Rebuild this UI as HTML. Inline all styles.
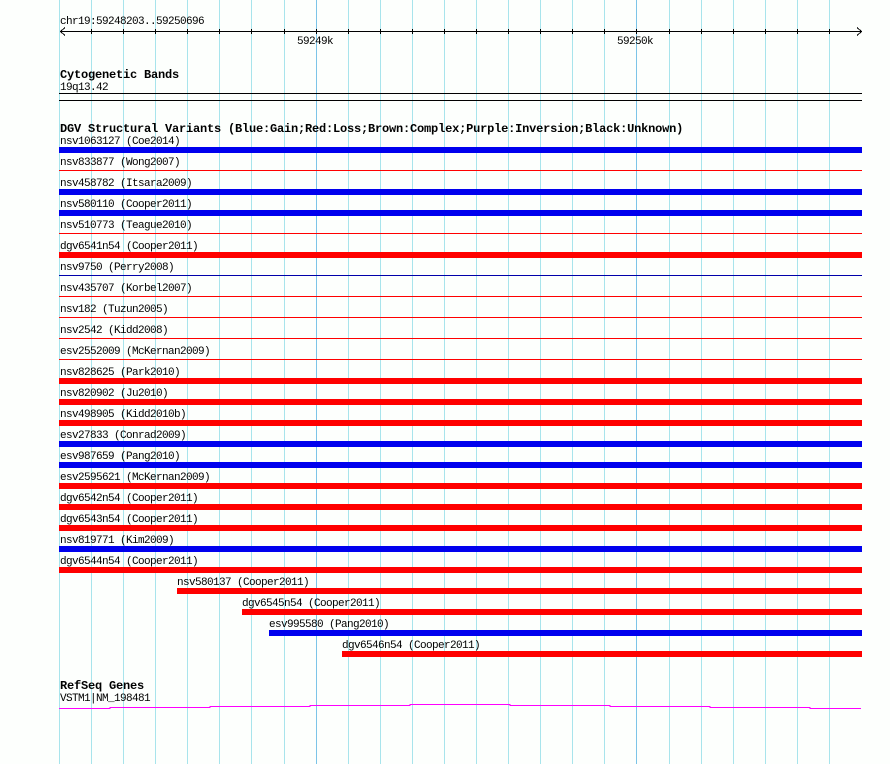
<!DOCTYPE html>
<html><head><meta charset="utf-8"><style>
body{margin:0;width:890px;height:764px;background:#fdfffd;position:relative;overflow:hidden;font-family:"Liberation Mono","DejaVu Sans Mono",monospace;}
.g{position:absolute;top:0;height:764px;width:1px;background:#a8e4ec;}
.gd{background:#7cc4e8;}
.t{position:absolute;font-size:11px;letter-spacing:-0.6px;line-height:10px;color:#000;white-space:pre;margin-top:2px;}
.b{position:absolute;font-size:12px;letter-spacing:-0.2px;line-height:12px;font-weight:bold;color:#000;white-space:pre;margin-top:1px;}
.r{position:absolute;}
</style></head><body>
<div class="g" style="left:59px"></div><div class="g" style="left:91px"></div><div class="g" style="left:123px"></div><div class="g" style="left:155px"></div><div class="g" style="left:187px"></div><div class="g" style="left:219px"></div><div class="g" style="left:251px"></div><div class="g" style="left:284px"></div><div class="g gd" style="left:316px"></div><div class="g" style="left:348px"></div><div class="g" style="left:380px"></div><div class="g" style="left:412px"></div><div class="g" style="left:444px"></div><div class="g" style="left:476px"></div><div class="g" style="left:508px"></div><div class="g" style="left:540px"></div><div class="g" style="left:572px"></div><div class="g" style="left:604px"></div><div class="g gd" style="left:636px"></div><div class="g" style="left:669px"></div><div class="g" style="left:701px"></div><div class="g" style="left:733px"></div><div class="g" style="left:765px"></div><div class="g" style="left:797px"></div><div class="g" style="left:829px"></div>

<div class="t" style="left:60px;top:15px">chr19:59248203..59250696</div>
<svg class="r" style="left:0;top:0" width="890" height="50">
<g stroke="#000" stroke-width="1" fill="none" shape-rendering="crispEdges">
<line x1="60" y1="31.5" x2="862" y2="31.5"/>
<polyline points="65,27.5 60.5,31.5 65,35.5"/>
<polyline points="857,27.5 861.5,31.5 857,35.5"/>
<path d="M91.5 29v5M123.5 29v5M155.5 29v5M187.5 29v5M219.5 29v5M251.5 29v5M284.5 29v5M316.5 29v5M348.5 29v5M380.5 29v5M412.5 29v5M444.5 29v5M476.5 29v5M508.5 29v5M540.5 29v5M572.5 29v5M604.5 29v5M636.5 29v5M669.5 29v5M701.5 29v5M733.5 29v5M765.5 29v5M797.5 29v5M829.5 29v5"/>
</g></svg>
<div class="t" style="left:297px;top:35px">59249k</div>
<div class="t" style="left:617px;top:35px">59250k</div>

<div class="b" style="left:60px;top:68px">Cytogenetic Bands</div>
<div class="t" style="left:60px;top:81px">19q13.42</div>
<div class="r" style="left:59px;top:93px;width:803px;height:1px;background:#000"></div>
<div class="r" style="left:59px;top:100px;width:803px;height:1px;background:#000"></div>

<div class="b" style="left:60px;top:122px">DGV Structural Variants (Blue:Gain;Red:Loss;Brown:Complex;Purple:Inversion;Black:Unknown)</div>

<div class="t" style="left:60px;top:135px">nsv1063127 (Coe2014)</div><div class="r" style="left:59px;top:147px;width:803px;height:6px;background:#0000ee"></div>
<div class="t" style="left:60px;top:156px">nsv833877 (Wong2007)</div><div class="r" style="left:59px;top:170px;width:803px;height:1px;background:#f00"></div>
<div class="t" style="left:60px;top:177px">nsv458782 (Itsara2009)</div><div class="r" style="left:59px;top:189px;width:803px;height:6px;background:#0000ee"></div>
<div class="t" style="left:60px;top:198px">nsv580110 (Cooper2011)</div><div class="r" style="left:59px;top:210px;width:803px;height:6px;background:#0000ee"></div>
<div class="t" style="left:60px;top:219px">nsv510773 (Teague2010)</div><div class="r" style="left:59px;top:233px;width:803px;height:1px;background:#f00"></div>
<div class="t" style="left:60px;top:240px">dgv6541n54 (Cooper2011)</div><div class="r" style="left:59px;top:252px;width:803px;height:6px;background:#f00"></div>
<div class="t" style="left:60px;top:261px">nsv9750 (Perry2008)</div><div class="r" style="left:59px;top:275px;width:803px;height:1px;background:#0000aa"></div>
<div class="t" style="left:60px;top:282px">nsv435707 (Korbel2007)</div><div class="r" style="left:59px;top:296px;width:803px;height:1px;background:#f00"></div>
<div class="t" style="left:60px;top:303px">nsv182 (Tuzun2005)</div><div class="r" style="left:59px;top:317px;width:803px;height:1px;background:#f00"></div>
<div class="t" style="left:60px;top:324px">nsv2542 (Kidd2008)</div><div class="r" style="left:59px;top:338px;width:803px;height:1px;background:#f00"></div>
<div class="t" style="left:60px;top:345px">esv2552009 (McKernan2009)</div><div class="r" style="left:59px;top:359px;width:803px;height:1px;background:#f00"></div>
<div class="t" style="left:60px;top:366px">nsv828625 (Park2010)</div><div class="r" style="left:59px;top:378px;width:803px;height:6px;background:#f00"></div>
<div class="t" style="left:60px;top:387px">nsv820902 (Ju2010)</div><div class="r" style="left:59px;top:399px;width:803px;height:6px;background:#f00"></div>
<div class="t" style="left:60px;top:408px">nsv498905 (Kidd2010b)</div><div class="r" style="left:59px;top:420px;width:803px;height:6px;background:#f00"></div>
<div class="t" style="left:60px;top:429px">esv27833 (Conrad2009)</div><div class="r" style="left:59px;top:441px;width:803px;height:6px;background:#0000ee"></div>
<div class="t" style="left:60px;top:450px">esv987659 (Pang2010)</div><div class="r" style="left:59px;top:462px;width:803px;height:6px;background:#0000ee"></div>
<div class="t" style="left:60px;top:471px">esv2595621 (McKernan2009)</div><div class="r" style="left:59px;top:483px;width:803px;height:6px;background:#f00"></div>
<div class="t" style="left:60px;top:492px">dgv6542n54 (Cooper2011)</div><div class="r" style="left:59px;top:504px;width:803px;height:6px;background:#f00"></div>
<div class="t" style="left:60px;top:513px">dgv6543n54 (Cooper2011)</div><div class="r" style="left:59px;top:525px;width:803px;height:6px;background:#f00"></div>
<div class="t" style="left:60px;top:534px">nsv819771 (Kim2009)</div><div class="r" style="left:59px;top:546px;width:803px;height:6px;background:#0000ee"></div>
<div class="t" style="left:60px;top:555px">dgv6544n54 (Cooper2011)</div><div class="r" style="left:59px;top:567px;width:803px;height:6px;background:#f00"></div>
<div class="t" style="left:177px;top:576px">nsv580137 (Cooper2011)</div><div class="r" style="left:177px;top:588px;width:685px;height:6px;background:#f00"></div>
<div class="t" style="left:242px;top:597px">dgv6545n54 (Cooper2011)</div><div class="r" style="left:242px;top:609px;width:620px;height:6px;background:#f00"></div>
<div class="t" style="left:269px;top:618px">esv995580 (Pang2010)</div><div class="r" style="left:269px;top:630px;width:593px;height:6px;background:#0000ee"></div>
<div class="t" style="left:342px;top:639px">dgv6546n54 (Cooper2011)</div><div class="r" style="left:342px;top:651px;width:520px;height:6px;background:#f00"></div>

<div class="b" style="left:60px;top:679px">RefSeq Genes</div>
<div class="t" style="left:60px;top:692px">VSTM1|NM_198481</div>
<svg class="r" style="left:0;top:690px" width="890" height="30">
<polyline fill="none" stroke="#ff00ff" stroke-width="1" shape-rendering="crispEdges" points="59,18.5 110,18.5 110,17.5 210,17.5 210,16.5 310,16.5 310,15.5 410,15.5 410,14.5 510,14.5 510,15.5 610,15.5 610,16.5 710,16.5 710,17.5 810,17.5 810,18.5 861,18.5"/>
</svg>
</body></html>
